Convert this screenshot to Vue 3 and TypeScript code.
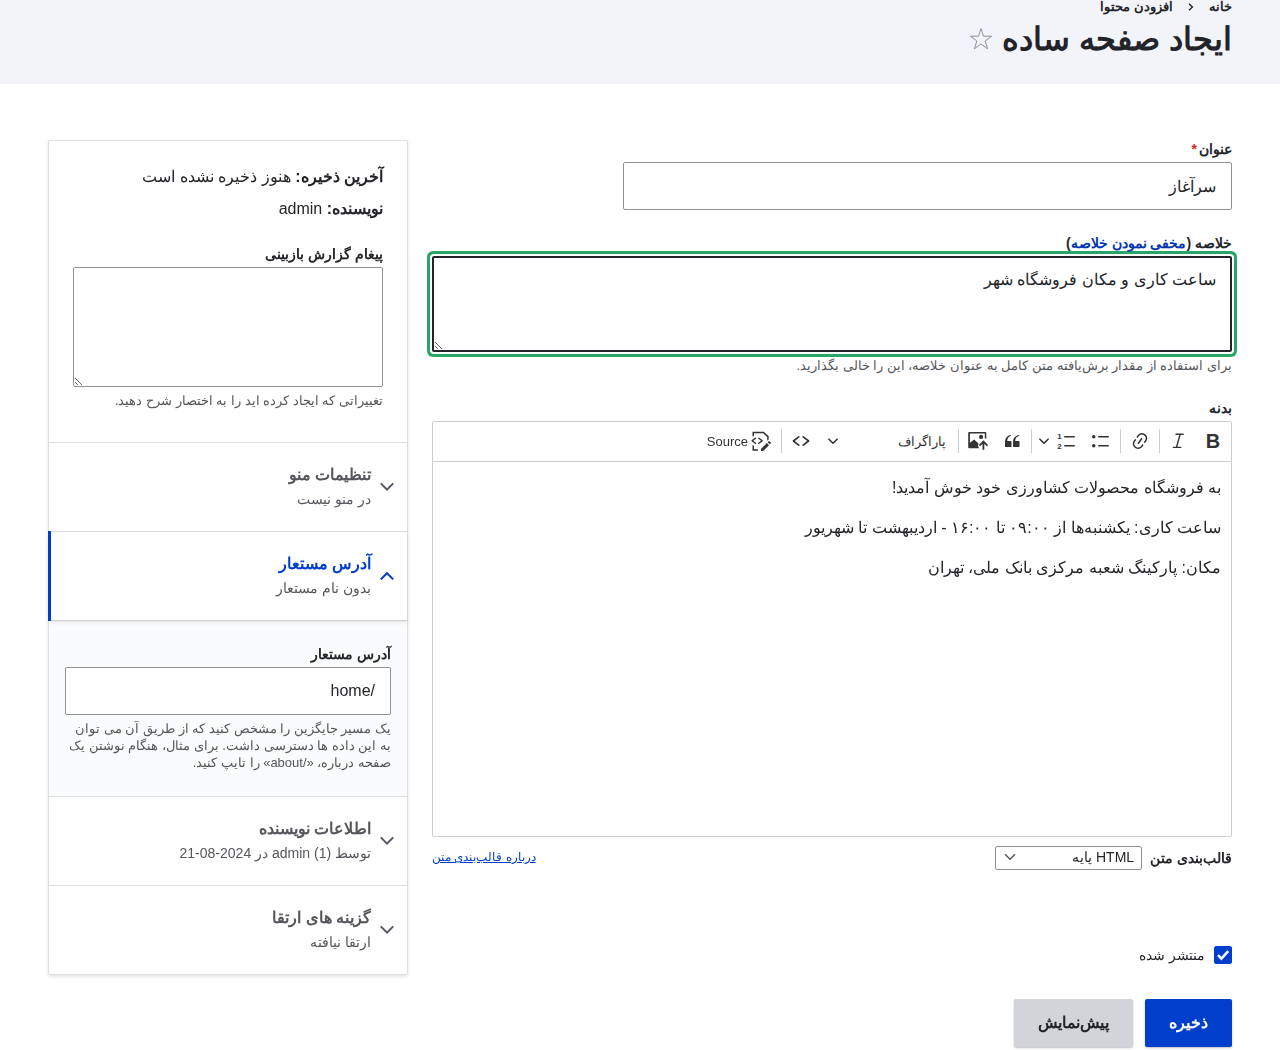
<script setup lang="ts">
import { onMounted, ref } from 'vue'

interface Panel {
  id: string
  title: string
  summary: string
  open: boolean
}

const title = ref('سرآغاز')
const summary = ref('ساعت کاری و مکان فروشگاه شهر')
const revisionLog = ref('')
const alias = ref('/home')
const format = ref('basic_html')
const published = ref(true)
const summaryField = ref<HTMLTextAreaElement | null>(null)

const panels = ref<Panel[]>([
  { id: 'menu', title: 'تنظیمات منو', summary: 'در منو نیست', open: false },
  { id: 'alias', title: 'آدرس مستعار', summary: 'بدون نام مستعار', open: true },
  { id: 'author', title: 'اطلاعات نویسنده', summary: 'توسط admin (1) در 2024-08-21', open: false },
  { id: 'promote', title: 'گزینه های ارتقا', summary: 'ارتقا نیافته', open: false },
])

const paragraphs: string[] = [
  'به فروشگاه محصولات کشاورزی خود خوش آمدید!',
  'ساعت کاری: یکشنبه‌ها از ۰۹:۰۰ تا ۱۶:۰۰ - اردیبهشت تا شهریور',
  'مکان: پارکینگ شعبه مرکزی بانک ملی، تهران',
]

onMounted(() => {
  const field = summaryField.value
  if (!field) return
  field.focus({ preventScroll: true })
  field.setSelectionRange(field.value.length, field.value.length)
})
</script>

<template>
  <div class="page" dir="rtl" lang="fa">
    <header class="header">
      <nav class="breadcrumb" aria-label="مسیر">
        <a href="#">خانه</a>
        <svg width="6" height="10" viewBox="0 0 6 10"><path d="M1 1.8 4.4 5 1 8.2" /></svg>
        <a href="#">افزودن محتوا</a>
      </nav>
      <div class="title-row">
        <h1>ایجاد صفحه ساده</h1>
        <button type="button" class="star" aria-label="افزودن به میانبرها">
          <svg width="24" height="24" viewBox="0 0 24 24">
            <path d="M12 1.6 14.5 9.2H22.6L16.1 14 18.6 21.8 12 17 5.4 21.8 7.9 14 1.4 9.2H9.5Z" />
          </svg>
        </button>
      </div>
    </header>

    <form class="layout" @submit.prevent>
      <main>
        <div class="field">
          <label class="label" for="title">عنوان<span class="required">*</span></label>
          <input id="title" v-model="title" class="control title-input" type="text" />
        </div>

        <div class="field">
          <div class="label">
            <label for="summary">خلاصه</label> (<a href="#" class="toggle">مخفی نمودن خلاصه</a>)
          </div>
          <textarea id="summary" ref="summaryField" v-model="summary" class="control summary"></textarea>
          <p class="description">
            برای استفاده از مقدار برش‌یافته متن کامل به عنوان خلاصه، این را خالی بگذارید.
          </p>
        </div>

        <div class="field">
          <div id="body-label" class="label">بدنه</div>
          <div class="editor">
            <div class="toolbar" role="toolbar">
              <button type="button" class="tool bold" aria-label="پررنگ">B</button>
              <button type="button" class="tool" aria-label="مورب">
                <svg viewBox="0 0 20 20" class="line"><path stroke-width="1.4" d="M7 3.3h7.2M4.4 16.4h7.4M7.5 16.3 11.1 3.4" /></svg>
              </button>
              <span class="sep"></span>
              <button type="button" class="tool" aria-label="پیوند">
                <svg viewBox="0 0 20 20"><path d="m11.077 15 .991-1.416a.75.75 0 1 1 1.229.86l-1.148 1.64a.748.748 0 0 1-.217.206 5.251 5.251 0 0 1-8.503-5.955.741.741 0 0 1 .12-.274l1.147-1.639a.75.75 0 1 1 1.228.86L4.933 10.7l.006.003a3.75 3.75 0 0 0 6.132 4.294l.006.004zm5.494-5.335a.748.748 0 0 1-.12.274l-1.147 1.639a.75.75 0 1 1-1.228-.86l.86-1.23a3.75 3.75 0 0 0-6.144-4.301l-.86 1.229a.75.75 0 0 1-1.229-.86l1.148-1.64a.748.748 0 0 1 .217-.206 5.251 5.251 0 0 1 8.503 5.955zm-4.563-2.532a.75.75 0 0 1 .184 1.045l-3.155 4.505a.75.75 0 1 1-1.229-.86l3.155-4.506a.75.75 0 0 1 1.045-.184z" /></svg>
              </button>
              <span class="sep"></span>
              <button type="button" class="tool" aria-label="فهرست نقطه‌ای">
                <svg viewBox="0 0 20 20">
                  <rect x="7" y="5" width="11" height="1.5" rx=".75" /><rect x="7" y="14" width="11" height="1.5" rx=".75" />
                  <circle cx="2.75" cy="5.75" r="1.75" /><circle cx="2.75" cy="14.75" r="1.75" />
                </svg>
              </button>
              <div class="split">
                <button type="button" class="tool" aria-label="فهرست شماره‌دار">
                  <svg viewBox="0 0 20 20">
                    <rect x="7" y="5" width="11" height="1.5" rx=".75" /><rect x="7" y="14" width="11" height="1.5" rx=".75" />
                    <text x="4.8" y="8" class="digit">1</text><text x="4.8" y="18" class="digit">2</text>
                  </svg>
                </button>
                <button type="button" class="tool narrow" aria-label="گزینه‌های فهرست">
                  <svg viewBox="0 0 10 10" class="line caret"><path d="M.9 3.2 5 7.2 9.1 3.2" /></svg>
                </button>
              </div>
              <span class="sep"></span>
              <button type="button" class="tool" aria-label="نقل قول">
                <svg viewBox="0 0 20 20"><path d="M3 10.423a6.5 6.5 0 0 1 6.056-6.408l.038.67C6.448 5.423 5.354 7.663 5.22 10H9c.552 0 .5.432.5.986v4.511c0 .554-.448.503-1 .503h-5c-.552 0-.5-.449-.5-1.003v-4.574zm8 0a6.5 6.5 0 0 1 6.056-6.408l.038.67c-2.646.739-3.74 2.979-3.873 5.315H17c.552 0 .5.432.5.986v4.511c0 .554-.448.503-1 .503h-5c-.552 0-.5-.449-.5-1.003v-4.574z" /></svg>
              </button>
              <button type="button" class="tool" aria-label="بارگذاری تصویر">
                <svg viewBox="0 0 20 20">
                  <path d="M1.2 1h16.1a1 1 0 0 1 1 1v5.6h-1.5V2.5H1.9v9.2L6.2 8.6l4.6 4.2-.9 1.5 1 3H1.2a1 1 0 0 1-1-1V2a1 1 0 0 1 1-1z" />
                  <circle cx="13.1" cy="5.9" r="2.1" />
                  <path class="stroke" d="M15.4 18.8V11M11.4 14.6 15.4 10.6 19.4 14.6" />
                </svg>
              </button>
              <span class="sep"></span>
              <button type="button" class="heading-select">
                <span>پاراگراف</span>
                <svg viewBox="0 0 10 10" class="line caret"><path d="M.9 3.2 5 7.2 9.1 3.2" /></svg>
              </button>
              <button type="button" class="tool" aria-label="قطعه کد">
                <svg viewBox="0 0 20 20" class="line"><path stroke-width="1.6" d="M7.8 5.8 2.4 10 7.8 14.2M12.2 5.8 17.6 10 12.2 14.2" /></svg>
              </button>
              <span class="sep"></span>
              <button type="button" class="source">
                <svg viewBox="0 0 20 20">
                  <path d="M1.5 5.6V.8h11.2l5 4.4v3.2l-1.5 1.4V5.9l-4.1-3.6H3v2.4zM1.5 14 3 15v3.2h4v1.5H1.5z" />
                  <path d="M4.06 6.64a.75.75 0 0 1 .958 1.15l-.085.07L2.29 9.75l2.646 1.89c.302.216.4.62.232.951l-.058.095a.75.75 0 0 1-.951.232l-.095-.058-3.5-2.5V9.14l3.496-2.5zm4.194 6.22a.75.75 0 0 1-.958-1.149l.085-.07 2.643-1.89-2.646-1.89a.75.75 0 0 1-.232-.952l.058-.095a.75.75 0 0 1 .95-.232l.096.058 3.5 2.5v1.22l-3.496 2.5zm7.644-.836 2.122 2.122-5.825 5.809-2.125-.005.003-2.116zm2.539-1.847 1.414 1.414a.5.5 0 0 1 0 .707l-1.06 1.06-2.122-2.12 1.061-1.061a.5.5 0 0 1 .707 0z" />
                </svg>
                <span>Source</span>
              </button>
            </div>
            <div class="content" contenteditable="true" role="textbox" aria-labelledby="body-label">
              <p v-for="text in paragraphs" :key="text">{{ text }}</p>
            </div>
          </div>
          <div class="format-row">
            <label class="label" for="format">قالب‌بندی متن</label>
            <div class="select-wrap">
              <select id="format" v-model="format">
                <option value="basic_html">HTML پایه</option>
                <option value="full_html">HTML کامل</option>
              </select>
              <svg width="12" height="8" viewBox="0 0 12 8"><path d="M1 1.2 6 6.2 11 1.2" /></svg>
            </div>
            <a href="#" class="about">درباره قالب‌بندی متن</a>
          </div>
        </div>

        <div class="published">
          <span class="check">
            <input id="published" v-model="published" type="checkbox" />
            <svg v-if="published" width="18" height="18" viewBox="0 0 18 18"><path d="M4 9.2 7.4 12.6 14.2 5.2" /></svg>
          </span>
          <label for="published">منتشر شده</label>
        </div>

        <div class="actions">
          <button type="submit" class="button primary">ذخیره</button>
          <button type="button" class="button">پیش‌نمایش</button>
        </div>
      </main>

      <aside class="sidebar">
        <section class="meta">
          <p><strong>آخرین ذخیره:</strong> هنوز ذخیره نشده است</p>
          <p><strong>نویسنده:</strong> admin</p>
          <label class="label" for="log">پیغام گزارش بازبینی</label>
          <textarea id="log" v-model="revisionLog" class="control log"></textarea>
          <div class="description">تغییراتی که ایجاد کرده اید را به اختصار شرح دهید.</div>
        </section>

        <section v-for="panel in panels" :key="panel.id" class="panel">
          <button
            type="button"
            class="panel-head"
            :class="{ open: panel.open }"
            :aria-expanded="panel.open"
            @click="panel.open = !panel.open"
          >
            <svg width="16" height="16" viewBox="0 0 16 16">
              <path :d="panel.open ? 'M1.8 11.4 8 5.2 14.2 11.4' : 'M1.8 4.4 8 10.6 14.2 4.4'" />
            </svg>
            <span class="panel-text">
              <span class="panel-title">{{ panel.title }}</span>
              <span class="panel-summary">{{ panel.summary }}</span>
            </span>
          </button>
          <div v-if="panel.open && panel.id === 'alias'" class="panel-body">
            <label class="label" for="alias">آدرس مستعار</label>
            <input id="alias" v-model="alias" class="control" type="text" />
            <p class="description">
              یک مسیر جایگزین را مشخص کنید که از طریق آن می توان به این داده ها دسترسی داشت. برای مثال، هنگام نوشتن یک صفحه درباره، «/about» را تایپ کنید.
            </p>
          </div>
        </section>
      </aside>
    </form>
  </div>
</template>

<style>
body {
  margin: 0;
  background: #fff;
}
</style>

<style scoped>
.page,
.page button,
.page input,
.page select,
.page textarea {
  font-family: 'Liberation Sans', sans-serif;
  color: #232429;
}
.page {
  font-size: 16px;
  line-height: 24px;
}
.page * {
  box-sizing: border-box;
}
p,
h1 {
  margin: 0;
}
a {
  color: #003ecc;
}
button {
  margin: 0;
  padding: 0;
  border: 0;
  background: none;
}
svg {
  display: block;
  flex: none;
}

.header {
  height: 84px;
  padding: 0 48px;
  background: #f3f4f9;
}
.breadcrumb {
  display: flex;
  align-items: center;
  gap: 15px;
  height: 14px;
  font-size: 13px;
  font-weight: 700;
  line-height: 14px;
}
.breadcrumb a {
  color: #232429;
  text-decoration: none;
}
.breadcrumb svg {
  fill: none;
  stroke: #232429;
  stroke-width: 1.4;
}
.title-row {
  display: flex;
  align-items: center;
  gap: 9px;
  height: 50px;
}
h1 {
  font-size: 32px;
  line-height: 42px;
  font-weight: 700;
}
.star svg {
  fill: none;
  stroke: #8e929c;
  stroke-width: 1;
}

.layout {
  display: grid;
  grid-template-columns: minmax(0, 1fr) 360px;
  align-items: start;
  gap: 24px;
  padding: 56px 48px 3px;
}
.field {
  margin-bottom: 24px;
}
.label {
  display: block;
  margin-bottom: 4px;
  font-size: 14px;
  line-height: 18px;
  font-weight: 700;
}
.required {
  margin-inline-start: 2px;
  color: #dc2323;
}
.toggle {
  color: #0036b1;
  text-decoration: none;
}
.control {
  display: block;
  width: 100%;
  height: 48px;
  margin: 0;
  padding: 11px 15px;
  border: 1px solid #919297;
  border-radius: 2px;
  outline: 0;
  background: #fff;
  font-size: 16px;
  line-height: 24px;
}
.title-input {
  max-width: 609px;
}
.summary {
  height: 96px;
  resize: vertical;
}
.summary:focus {
  padding: 10px 14px;
  border: 2px solid #232429;
  box-shadow: 0 0 0 2px #fff, 0 0 0 5px #26a769;
}
.log {
  height: 120px;
  resize: vertical;
}
.description {
  padding: 5px 0 1px;
  font-size: 13px;
  line-height: 17px;
  color: #55565b;
}

.editor {
  border: 1px solid #ccced1;
  border-radius: 2px;
}
.toolbar {
  display: flex;
  align-items: center;
  gap: 4px;
  height: 40px;
  padding: 0 3px 1px;
  border-bottom: 1px solid #ccced1;
}
.tool {
  display: flex;
  align-items: center;
  justify-content: center;
  width: 30px;
  height: 30px;
}
.tool svg,
.source svg {
  width: 20px;
  height: 20px;
  overflow: visible;
  fill: #333;
}
.page .bold {
  font-size: 20px;
  line-height: 30px;
  font-weight: 700;
  color: #333;
}
.toolbar .line {
  fill: none;
  stroke: #333;
  stroke-width: 1.6;
  stroke-linecap: round;
  stroke-linejoin: round;
}
.stroke {
  fill: none;
  stroke: #333;
  stroke-width: 1.8;
}
.digit {
  font-size: 8px;
  font-weight: 700;
  direction: ltr;
  text-anchor: end;
}
.toolbar .caret {
  width: 10px;
  height: 10px;
}
.narrow {
  width: 16px;
}
.split {
  display: flex;
}
.sep {
  width: 1px;
  height: 24px;
  background: #ccced1;
}
.heading-select {
  display: flex;
  align-items: center;
  justify-content: space-between;
  width: 134px;
  height: 30px;
  padding: 0 8px;
  font-size: 13px;
}
.page .heading-select,
.page .source {
  color: #333;
}
.source {
  display: flex;
  align-items: center;
  gap: 3px;
  height: 30px;
  padding: 0 6px;
  font-size: 13px;
}
.content {
  min-height: 374px;
  padding: 14px 10px;
  outline: 0;
}
.content p + p {
  margin-top: 16px;
}
.format-row {
  display: flex;
  align-items: center;
  gap: 8px;
  margin-top: 9px;
}
.format-row .label {
  margin: 0;
}
.select-wrap {
  position: relative;
}
.select-wrap select {
  display: block;
  width: 147px;
  height: 24px;
  margin: 0;
  padding: 0 7px 2px;
  border: 1px solid #919297;
  border-radius: 2px;
  appearance: none;
  background: #fff;
  font-size: 14px;
}
.select-wrap svg {
  position: absolute;
  left: 9px;
  top: 7px;
  pointer-events: none;
  fill: none;
  stroke: #55565b;
  stroke-width: 1.4;
}
.about {
  margin-inline-start: auto;
  padding-bottom: 2px;
  font-size: 12px;
  line-height: 18px;
}

.published {
  display: flex;
  align-items: center;
  gap: 9px;
  margin-top: 76px;
  font-size: 14px;
  line-height: 18px;
}
.check {
  position: relative;
}
.check input {
  display: block;
  width: 18px;
  height: 18px;
  margin: 0;
  appearance: none;
  border-radius: 2px;
  border: 1px solid #919297;
}
.check input:checked {
  border-color: #003ecc;
  background: #003ecc;
}
.check svg {
  position: absolute;
  inset: 0;
  pointer-events: none;
  fill: none;
  stroke: #fff;
  stroke-width: 2.6;
}
.actions {
  display: flex;
  gap: 12px;
  margin-top: 35px;
}
.button {
  height: 48px;
  padding: 0 24px 2px;
  border-radius: 2px;
  background: #d3d4d9;
  box-shadow: 0 1px 2px rgba(0, 0, 0, 0.25);
  font-size: 16px;
  font-weight: 700;
}
.page .primary {
  background: #003ecc;
  color: #fff;
}

.sidebar {
  border: 1px solid #dedfe4;
  border-radius: 2px;
  box-shadow: 0 2px 4px rgba(0, 0, 0, 0.1);
}
.meta {
  padding: 24px 24px 32px;
}
.meta p + p {
  margin-top: 8px;
}
.meta > .label {
  margin-top: 24px;
}
.panel {
  border-top: 1px solid #dedfe4;
}
.panel-head {
  display: flex;
  align-items: center;
  gap: 8px;
  width: 100%;
  height: 88px;
  padding: 0 12px;
  text-align: right;
}
.panel-head svg {
  fill: none;
  stroke: #545560;
  stroke-width: 2;
}
.panel-text {
  display: flex;
  flex-direction: column;
}
.panel-title {
  font-size: 16px;
  line-height: 24px;
  font-weight: 700;
  color: #55565b;
}
.panel-summary {
  font-size: 14px;
  line-height: 24px;
  color: #55565b;
}
.open {
  position: relative;
  box-shadow: 0 1px 0 #d0d1d6, 0 2px 4px rgba(0, 0, 0, 0.1);
}
.open::before {
  content: '';
  position: absolute;
  top: -1px;
  bottom: -1px;
  left: -1px;
  width: 3px;
  background: #003ecc;
}
.open svg {
  stroke: #003ecc;
}
.open .panel-title {
  color: #003ecc;
}
.panel-body {
  padding: 25px 16px 24px;
  background: #fafbfd;
}
</style>
